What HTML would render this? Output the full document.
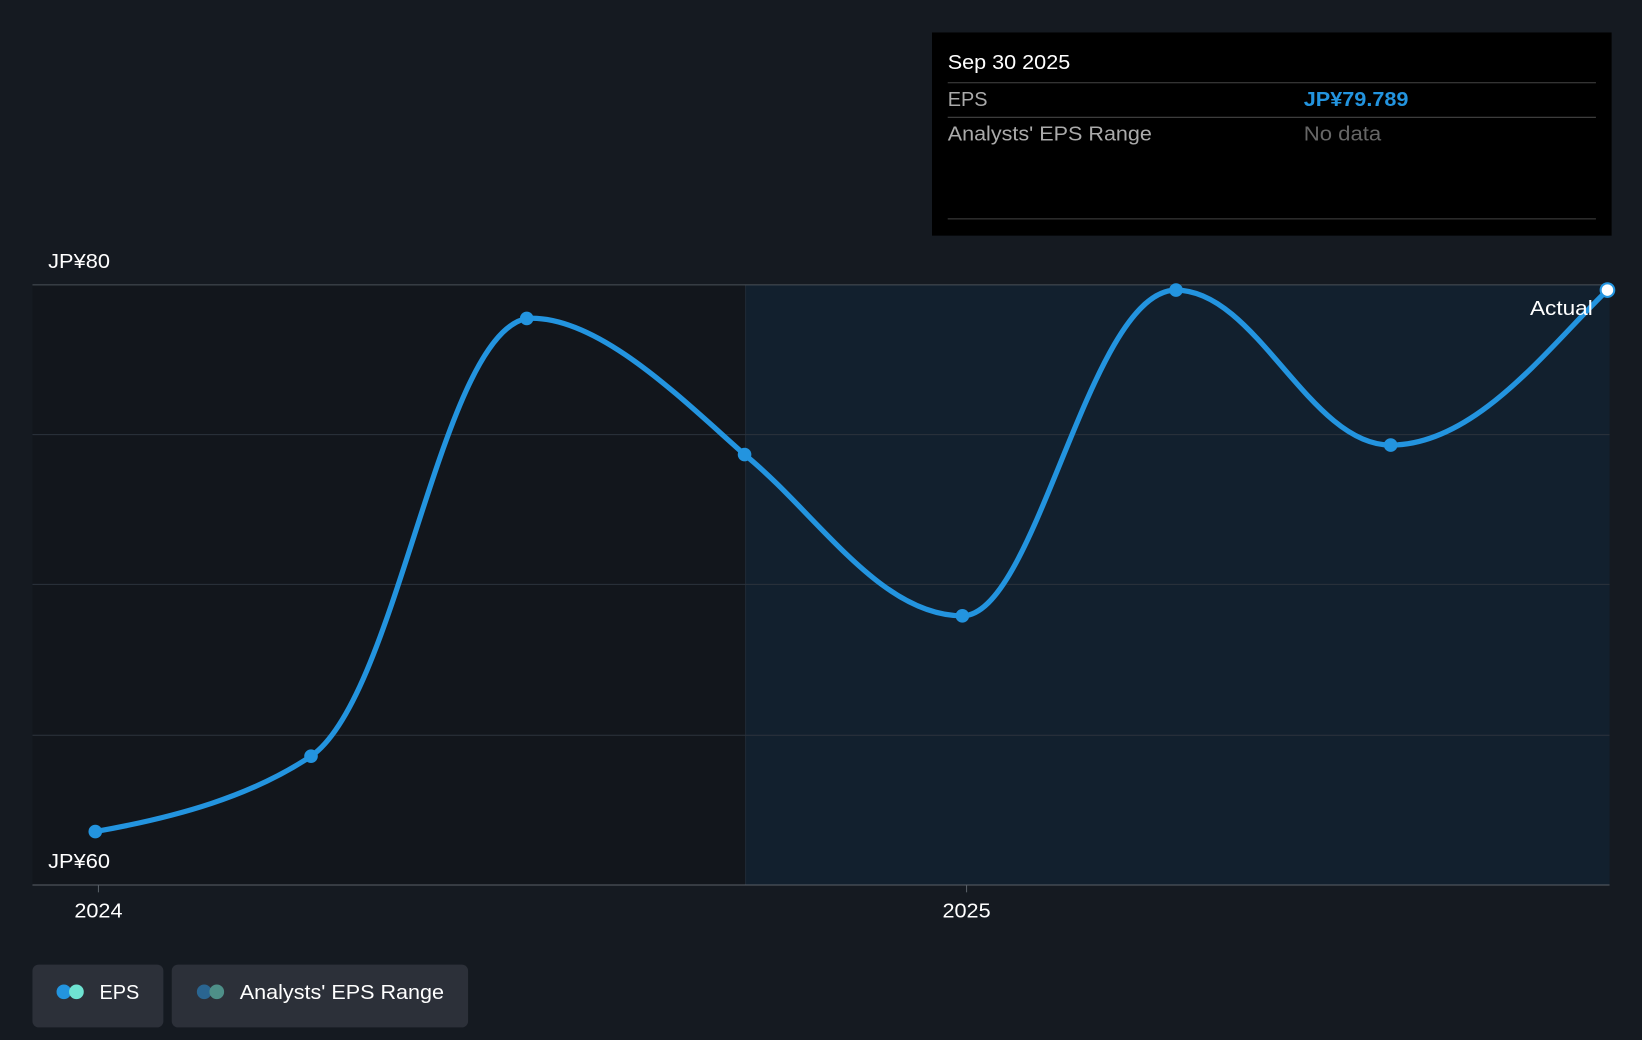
<!DOCTYPE html>
<html><head><meta charset="utf-8"><style>
html,body{margin:0;padding:0;background:#151a21;width:1642px;height:1040px;overflow:hidden}
svg{display:block}
text{font-family:"Liberation Sans",sans-serif}
</style></head><body>
<svg width="1642" height="1040" viewBox="0 0 1568 993" preserveAspectRatio="none">
<rect width="1568" height="993" fill="#151a21"/>
<rect x="31" y="272" width="681" height="573" fill="#12161c"/>
<rect x="712" y="272" width="825" height="573" fill="#12202e"/>
<line x1="712" y1="272" x2="712" y2="845" stroke="#1f2a36" stroke-width="1"/>
<g stroke="#2c333d" stroke-width="1">
<line x1="31" y1="272" x2="1537" y2="272" stroke="#4a5058"/>
<line x1="31" y1="415" x2="1537" y2="415"/>
<line x1="31" y1="558" x2="1537" y2="558"/>
<line x1="31" y1="702" x2="1537" y2="702"/>
<line x1="31" y1="845" x2="1537" y2="845" stroke="#5a6068"/>
</g>
<line x1="94" y1="845" x2="94" y2="852" stroke="#5a6068"/>
<line x1="923" y1="845" x2="923" y2="852" stroke="#5a6068"/>
<text x="46" y="256" fill="#fff" font-size="19.5" textLength="59" lengthAdjust="spacingAndGlyphs">JP¥80</text>
<text x="46" y="829" fill="#fff" font-size="19.5" textLength="59" lengthAdjust="spacingAndGlyphs">JP¥60</text>
<text x="71" y="876" fill="#fff" font-size="19.5" textLength="46" lengthAdjust="spacingAndGlyphs">2024</text>
<text x="900" y="876" fill="#fff" font-size="19.5" textLength="46" lengthAdjust="spacingAndGlyphs">2025</text>
<path d="M91,794 C170,780 240,760 297,722 C380,665 420,320 503,304 C570,300 650,380 711,434 C780,490 840,588 919,588 C990,588 1040,277 1123,277 C1200,277 1250,425 1328,425 C1410,425 1480,330 1535,277" fill="none" stroke="#2394df" stroke-width="5" stroke-linecap="round"/>
<g fill="#2394df">
<circle cx="91" cy="794" r="6.5"/><circle cx="297" cy="722" r="6.5"/><circle cx="503" cy="304" r="6.5"/>
<circle cx="711" cy="434" r="6.5"/><circle cx="919" cy="588" r="6.5"/><circle cx="1123" cy="277" r="6.5"/>
<circle cx="1328" cy="425" r="6.5"/>
</g>
<circle cx="1535" cy="277" r="6.5" fill="#fff" stroke="#2394df" stroke-width="2"/>
<text x="1461" y="301" fill="#fff" font-size="19.5" textLength="60" lengthAdjust="spacingAndGlyphs">Actual</text>
<rect x="890" y="31" width="649" height="194" fill="#000"/>
<text x="905" y="66" fill="#fff" font-size="19.5" font-weight="500" textLength="117" lengthAdjust="spacingAndGlyphs">Sep 30 2025</text>
<line x1="905" y1="79" x2="1524" y2="79" stroke="#444"/>
<text x="905" y="101" fill="#aaa" font-size="19.5" textLength="38" lengthAdjust="spacingAndGlyphs">EPS</text>
<text x="1245" y="101" fill="#2394df" font-size="19.5" font-weight="bold" textLength="100" lengthAdjust="spacingAndGlyphs">JP¥79.789</text>
<line x1="905" y1="112" x2="1524" y2="112" stroke="#444"/>
<text x="905" y="134" fill="#aaa" font-size="19.5" textLength="195" lengthAdjust="spacingAndGlyphs">Analysts' EPS Range</text>
<text x="1245" y="134" fill="#666" font-size="19.5" textLength="74" lengthAdjust="spacingAndGlyphs">No data</text>
<line x1="905" y1="209" x2="1524" y2="209" stroke="#444"/>
<rect x="31" y="921" width="125" height="60" rx="6" fill="#2c3039"/>
<circle cx="61" cy="947" r="7" fill="#2394df"/><circle cx="73" cy="947" r="7" fill="#6fe3d2"/>
<text x="95" y="954" fill="#fff" font-size="19.5" textLength="38" lengthAdjust="spacingAndGlyphs">EPS</text>
<rect x="164" y="921" width="283" height="60" rx="6" fill="#2c3039"/>
<circle cx="195" cy="947" r="7" fill="#2a6591"/><circle cx="207" cy="947" r="7" fill="#4e8f88"/>
<text x="229" y="954" fill="#fff" font-size="19.5" textLength="195" lengthAdjust="spacingAndGlyphs">Analysts' EPS Range</text>
</svg>
</body></html>
